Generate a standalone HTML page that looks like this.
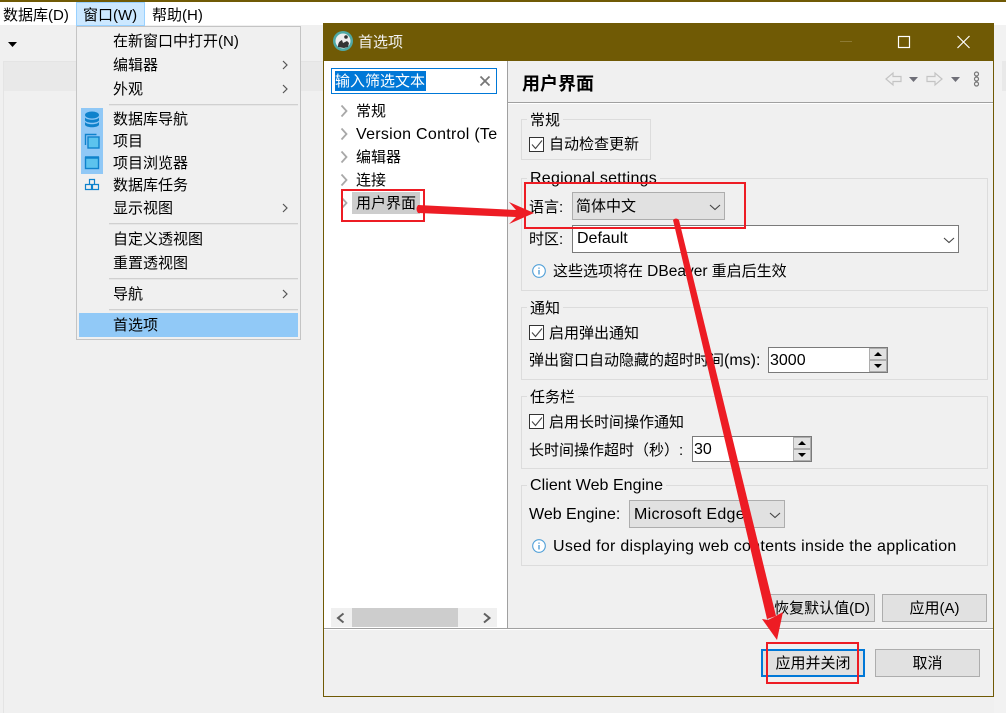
<!DOCTYPE html>
<html lang="zh">
<head>
<meta charset="utf-8">
<title>首选项</title>
<style>
html,body{margin:0;padding:0}
body{width:1006px;height:713px;position:relative;overflow:hidden;background:#f0f0f0;font-family:"Liberation Sans","Noto Sans CJK SC",sans-serif;font-size:15px;color:#000}
.a{position:absolute;box-sizing:border-box}
.t{position:absolute;white-space:nowrap;line-height:20px;height:20px;margin-top:1px}
.l{font-size:16px}
.g{position:absolute;box-sizing:border-box;border:1px solid #dcdcdc}
.gt{position:absolute;white-space:nowrap;line-height:20px;height:20px;background:#f0f0f0;padding:0 3px;margin-top:1px}
.sep{position:absolute;left:109px;width:189px;height:1px;background:#d0d0d0;box-shadow:0 1px 0 #e6e6e6}
.b{position:absolute;box-sizing:border-box;background:#e1e1e1;border:1px solid #adadad;text-align:center;line-height:27px}
.cb{position:absolute;box-sizing:border-box;width:15px;height:15px;background:#fff;border:1px solid #333}
svg{position:absolute;overflow:visible}
</style>
</head>
<body>
<!-- top app -->
<div class="a" style="left:0;top:0;width:1006px;height:2px;background:#705a05"></div>
<div class="a" style="left:0;top:2px;width:1006px;height:23px;background:#fff"></div>
<div class="a" style="left:76px;top:2px;width:69px;height:24px;background:#cce8ff;border:1px solid #99d1ff"></div>
<div class="t" style="left:3px;top:5px">数据库(D)</div>
<div class="t" style="left:83px;top:5px">窗口(W)</div>
<div class="t" style="left:152px;top:5px">帮助(H)</div>
<svg style="left:0;top:0" width="20" height="50"><path d="M8 42h9l-4.500 5z" fill="#000"/></svg>
<div class="a" style="left:3px;top:61px;width:320px;height:652px;background:#f0f0f0;border:1px solid #e4e4e4;border-width:1px 0 0 1px"></div>
<div class="a" style="left:4px;top:62px;width:319px;height:29px;background:#e9e9e9"></div>
<div class="a" style="left:994px;top:25px;width:12px;height:688px;background:#f2f2f2"></div>
<div class="a" style="left:1002px;top:61px;width:4px;height:30px;background:#e9e9e9"></div>

<!-- menu -->
<div class="a" style="left:76px;top:26px;width:225px;height:314px;background:#f0f0f0;border:1px solid #c4c4c4"></div>
<div class="a" style="left:81px;top:108px;width:22px;height:66px;background:#90c8f6"></div>
<div class="a" style="left:79px;top:313px;width:219px;height:24px;background:#91c9f7"></div>
<div class="sep" style="top:104px"></div>
<div class="sep" style="top:223px"></div>
<div class="sep" style="top:278px"></div>
<div class="sep" style="top:309px"></div>
<div class="t" style="left:113px;top:31px">在新窗口中打开(N)</div>
<div class="t" style="left:113px;top:55px">编辑器</div>
<div class="t" style="left:113px;top:79px">外观</div>
<div class="t" style="left:113px;top:109px">数据库导航</div>
<div class="t" style="left:113px;top:131px">项目</div>
<div class="t" style="left:113px;top:153px">项目浏览器</div>
<div class="t" style="left:113px;top:175px">数据库任务</div>
<div class="t" style="left:113px;top:198px">显示视图</div>
<div class="t" style="left:113px;top:229px">自定义透视图</div>
<div class="t" style="left:113px;top:253px">重置透视图</div>
<div class="t" style="left:113px;top:284px">导航</div>
<div class="t" style="left:113px;top:315px">首选项</div>
<svg style="left:0;top:0" width="310" height="340" fill="none" stroke="#555" stroke-width="1.200">
<path d="M283 61l4 4-4 4M283 85l4 4-4 4M283 204l4 4-4 4M283 290l4 4-4 4"/>
<g stroke="none" fill="#0f82cc">
<ellipse cx="92" cy="115" rx="7" ry="3.500"/><path d="M85 117.500c2 3 12 3 14 0v3c-2 3-12 3-14 0zM85 122c2 3 12 3 14 0v3c-2 3-12 3-14 0z"/>
</g>
<path d="M85.500 145v-10.500h11" stroke="#0f82cc" stroke-width="1.400"/>
<rect x="88" y="137" width="11" height="11" fill="#5cc3ee" stroke="#0f82cc" stroke-width="1.400"/>
<rect x="85.500" y="157.500" width="13" height="11" fill="#5cc3ee" stroke="#0f82cc" stroke-width="1.400"/>
<path d="M85 157.500h14" stroke="#0f82cc" stroke-width="2.500"/>
<path d="M89.500 179.500h5v5h-5zM85.500 184.500h6v5h-6zM92.500 184.500h6v5h-6z" stroke="#0f82cc"/>
</svg>

<!-- dialog -->
<div class="a" style="left:323px;top:23px;width:671px;height:674px;background:#f0f0f0;border:1px solid #705a05;border-top:0"></div>
<div class="a" style="left:323px;top:23px;width:671px;height:38px;background:#705a05"></div>
<svg style="left:333px;top:31px" width="20" height="20">
<circle cx="10" cy="10" r="10" fill="#4fa9a5"/><circle cx="10" cy="10" r="7.500" fill="#eee"/>
<path d="M5 16c0-5 2-6 4-7l1 3 4-2 2 2-1 4-4 1z" fill="#333"/><circle cx="13" cy="6" r="1.800" fill="#333"/>
</svg>
<div class="t" style="left:358px;top:32px;color:#f2f2f2">首选项</div>
<svg style="left:830px;top:30px" width="160" height="26" fill="none">
<path d="M10 11.500h12" stroke="#8d7a34"/>
<rect x="68.500" y="6.500" width="11" height="11" stroke="#fff" stroke-width="1.200"/>
<path d="M127.500 6l12 12M139.500 6l-12 12" stroke="#fff" stroke-width="1.200"/>
</svg>

<!-- left pane -->
<div class="a" style="left:324px;top:61px;width:183px;height:567px;background:#fff"></div>
<div class="a" style="left:507px;top:61px;width:1px;height:567px;background:#a0a0a0"></div>
<div class="a" style="left:331px;top:68px;width:166px;height:26px;background:#fff;border:1px solid #0078d7"></div>
<div class="a" style="left:335px;top:71px;width:91px;height:20px;background:#0078d7"></div>
<div class="t" style="left:335px;top:71px;color:#fff">输入筛选文本</div>
<svg style="left:479px;top:75px" width="12" height="12"><path d="M1.500 1.500l9 9M10.500 1.500l-9 9" stroke="#777" stroke-width="1.800"/></svg>
<svg style="left:340px;top:100px" width="12" height="110" fill="none" stroke="#a8a8a8" stroke-width="1.800">
<path d="M1.500 5.500l5 5.500-5 5.500M1.500 28.500l5 5.500-5 5.500M1.500 51.500l5 5.500-5 5.500M1.500 74.500l5 5.500-5 5.500M1.500 97.500l5 5.500-5 5.500"/>
</svg>
<div class="a" style="left:352px;top:192px;width:68px;height:22px;background:#cdcdcd"></div>
<div class="t" style="left:356px;top:101px">常规</div>
<div class="a" style="left:324px;top:124px;width:173px;height:22px;overflow:hidden"><div class="t l" style="left:32px;top:0;letter-spacing:.28px">Version Control (Team)</div></div>
<div class="t" style="left:356px;top:147px">编辑器</div>
<div class="t" style="left:356px;top:170px">连接</div>
<div class="t" style="left:356px;top:193px">用户界面</div>
<div class="a" style="left:331px;top:608px;width:166px;height:19px;background:#f0f0f0"></div>
<div class="a" style="left:352px;top:608px;width:106px;height:19px;background:#cdcdcd"></div>
<svg style="left:335px;top:612px" width="160" height="12" fill="none" stroke="#606060" stroke-width="2"><path d="M8.500 1.500L3 6l5.500 4.500M149 1.500L154.500 6 149 10.500"/></svg>

<!-- right pane -->
<div class="t" style="left:522px;top:73px;font-size:18px;font-weight:bold">用户界面</div>
<div class="a" style="left:508px;top:102px;width:485px;height:1px;background:#a0a0a0"></div>
<div class="a" style="left:508px;top:103px;width:485px;height:1px;background:#fff"></div>
<svg style="left:880px;top:66px" width="110" height="28">
<path d="M6 13l7-6v3.500h8v5h-8V19z" fill="#f0f0f0" stroke="#c4c4c4" stroke-width="1.200"/>
<path d="M29 11h9l-4.500 5z" fill="#6f6f78"/>
<path d="M63 13l-7-6v3.500h-8v5h8V19z" fill="#f0f0f0" stroke="#c4c4c4" stroke-width="1.200" transform="translate(-1 0)"/>
<path d="M71 11h9l-4.500 5z" fill="#6f6f78"/>
<g fill="none" stroke="#777" stroke-width="1.200"><circle cx="96.500" cy="8" r="2"/><circle cx="96.500" cy="13" r="2"/><circle cx="96.500" cy="18" r="2"/></g>
</svg>

<!-- groups -->
<div class="g" style="left:521px;top:119px;width:130px;height:41px"></div>
<div class="gt" style="left:527px;top:110px">常规</div>
<div class="cb" style="left:529px;top:137px"></div>
<div class="t" style="left:549px;top:134px">自动检查更新</div>

<div class="g" style="left:521px;top:178px;width:467px;height:113px"></div>
<div class="gt l" style="left:527px;top:168px;letter-spacing:.25px">Regional settings</div>
<div class="t" style="left:529px;top:197px">语言:</div>
<div class="a" style="left:572px;top:192px;width:153px;height:28px;background:#e1e1e1;border:1px solid #adadad"></div>
<div class="t" style="left:576px;top:196px">简体中文</div>
<div class="t" style="left:529px;top:229px">时区:</div>
<div class="a" style="left:572px;top:225px;width:387px;height:28px;background:#fff;border:1px solid #7a7a7a"></div>
<div class="t l" style="left:577px;top:228px">Default</div>
<svg style="left:532px;top:264px" width="14" height="14"><circle cx="7" cy="7" r="6.300" fill="#fff" stroke="#4f9fd8" stroke-width="1.100"/><path d="M7 6v4.500M7 3.500v1.300" stroke="#3a8fd0" stroke-width="1.200"/></svg>
<div class="t" style="left:553px;top:261px">这些选项将在 <span style="font-size:15.500px">DBeaver</span> 重启后生效</div>

<div class="g" style="left:521px;top:307px;width:467px;height:73px"></div>
<div class="gt" style="left:527px;top:298px">通知</div>
<div class="cb" style="left:529px;top:325px"></div>
<div class="t" style="left:549px;top:323px">启用弹出通知</div>
<div class="t" style="left:529px;top:350px">弹出窗口自动隐藏的超时时间<span class="l">(ms):</span></div>
<div class="a" style="left:768px;top:347px;width:120px;height:26px;background:#fff;border:1px solid #7a7a7a"></div>
<div class="t" style="left:770px;top:350px;font-size:16px">3000</div>

<div class="g" style="left:521px;top:396px;width:467px;height:73px"></div>
<div class="gt" style="left:527px;top:387px">任务栏</div>
<div class="cb" style="left:529px;top:414px"></div>
<div class="t" style="left:549px;top:412px">启用长时间操作通知</div>
<div class="t" style="left:529px;top:440px">长时间操作超时（秒）:</div>
<div class="a" style="left:692px;top:436px;width:120px;height:26px;background:#fff;border:1px solid #7a7a7a"></div>
<div class="t" style="left:694px;top:439px;font-size:16px">30</div>

<!-- spinners and checks -->
<svg style="left:0;top:0" width="1006" height="713" fill="none">
<g stroke="#444" stroke-width="1.100"><path d="M532 144.500l3.500 4 6.500-8M532 332.500l3.500 4 6.500-8M532 421.500l3.500 4 6.500-8"/></g>
<g stroke="#444" stroke-width="1.100"><path d="M710 205l5 4.500 5-4.500M944 238l5 4.500 5-4.500"/></g>
<g fill="#e1e1e1" stroke="#adadad"><rect x="869.500" y="348.500" width="17" height="11"/><rect x="869.500" y="360.500" width="17" height="11"/><rect x="793.500" y="437.500" width="17" height="11"/><rect x="793.500" y="449.500" width="17" height="11"/></g>
<g fill="#000"><path d="M874 356h8l-4-4zM874 364h8l-4 4zM798 445h8l-4-4zM798 453h8l-4 4z"/></g>
</svg>

<div class="g" style="left:521px;top:485px;width:467px;height:81px"></div>
<div class="gt l" style="left:527px;top:475px;letter-spacing:.05px">Client Web Engine</div>
<div class="t l" style="left:529px;top:504px">Web Engine:</div>
<div class="a" style="left:629px;top:500px;width:156px;height:28px;background:#e1e1e1;border:1px solid #adadad"></div>
<div class="t l" style="left:634px;top:504px;letter-spacing:.3px">Microsoft Edge</div>
<svg style="left:532px;top:539px" width="14" height="14"><circle cx="7" cy="7" r="6.300" fill="#fff" stroke="#4f9fd8" stroke-width="1.100"/><path d="M7 6v4.500M7 3.500v1.300" stroke="#3a8fd0" stroke-width="1.200"/></svg>
<div class="t l" style="left:553px;top:536px;letter-spacing:.27px">Used for displaying web contents inside the application</div>
<svg style="left:0;top:0" width="1006" height="713" fill="none"><path d="M770 513l5 4.500 5-4.500" stroke="#444" stroke-width="1.100"/></svg>

<div class="b" style="left:767px;top:594px;width:108px;height:28px;padding-left:2px">恢复默认值(D)</div>
<div class="b" style="left:882px;top:594px;width:105px;height:28px">应用(A)</div>
<div class="a" style="left:324px;top:628px;width:669px;height:1px;background:#a0a0a0"></div>
<div class="a" style="left:324px;top:629px;width:669px;height:1px;background:#fff"></div>
<div class="b" style="left:761px;top:649px;width:104px;height:28px;border:2px solid #0078d7;line-height:26px">应用并关闭</div>
<div class="b" style="left:875px;top:649px;width:105px;height:28px">取消</div>

<!-- annotations -->
<svg style="left:0;top:0" width="1006" height="713">
<g fill="none" stroke="#ed1c24" stroke-width="2">
<rect x="342" y="190" width="82" height="31"/>
<rect x="525" y="183" width="220" height="45"/>
<rect x="767" y="643" width="91" height="40"/>
</g>
<g fill="#ed1c24">
<path d="M418 205l98 5-7-8 25 11-25 11 7-7-98-4q-3-4 0-8z"/>
<path d="M673 220q3-3 6 0l97 396-9 3z"/>
<path d="M762 619l15 21 6-28-9 5-6 3z"/>
</g>
</svg>
</body>
</html>
